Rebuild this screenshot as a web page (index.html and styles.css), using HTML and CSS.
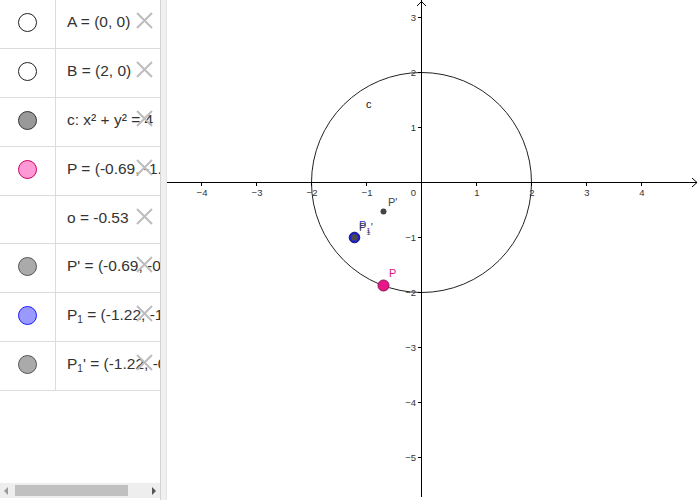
FILE: index.html
```html
<!DOCTYPE html>
<html>
<head>
<meta charset="utf-8">
<link rel="stylesheet" href="styles.css">
</head>
<body>
<div class="app">
  <div class="algebra">
    <div class="rows">
      <div class="row">
        <div class="marker"><span class="dot dot-white"></span></div>
        <div class="expr"><span class="text">A = (0, 0)</span><svg class="del" viewBox="0 0 17 17"><path d="M1 1L16 16M16 1L1 16"/></svg></div>
      </div>
      <div class="row">
        <div class="marker"><span class="dot dot-white"></span></div>
        <div class="expr"><span class="text">B = (2, 0)</span><svg class="del" viewBox="0 0 17 17"><path d="M1 1L16 16M16 1L1 16"/></svg></div>
      </div>
      <div class="row">
        <div class="marker"><span class="dot dot-dark"></span></div>
        <div class="expr"><span class="text">c: x² + y² = 4</span><svg class="del" viewBox="0 0 17 17"><path d="M1 1L16 16M16 1L1 16"/></svg></div>
      </div>
      <div class="row">
        <div class="marker"><span class="dot dot-pink"></span></div>
        <div class="expr"><span class="text">P = (-0.69, -1.88)</span><svg class="del" viewBox="0 0 17 17"><path d="M1 1L16 16M16 1L1 16"/></svg></div>
      </div>
      <div class="row">
        <div class="marker"></div>
        <div class="expr"><span class="text">o = -0.53</span><svg class="del" viewBox="0 0 17 17"><path d="M1 1L16 16M16 1L1 16"/></svg></div>
      </div>
      <div class="row">
        <div class="marker"><span class="dot dot-gray"></span></div>
        <div class="expr"><span class="text">P' = (-0.69, -0.53)</span><svg class="del" viewBox="0 0 17 17"><path d="M1 1L16 16M16 1L1 16"/></svg></div>
      </div>
      <div class="row">
        <div class="marker"><span class="dot dot-blue"></span></div>
        <div class="expr"><span class="text">P<sub>1</sub> = (-1.22, -1.00)</span><svg class="del" viewBox="0 0 17 17"><path d="M1 1L16 16M16 1L1 16"/></svg></div>
      </div>
      <div class="row">
        <div class="marker"><span class="dot dot-gray"></span></div>
        <div class="expr"><span class="text">P<sub>1</sub>' = (-1.22, -0.53)</span><svg class="del" viewBox="0 0 17 17"><path d="M1 1L16 16M16 1L1 16"/></svg></div>
      </div>
    </div>
    <div class="hscroll">
      <svg class="arrow" viewBox="0 0 5 8"><path d="M4 0L0 4L4 8Z"/></svg>
      <div class="track"><div class="thumb"></div></div>
      <svg class="arrow arrow-right" viewBox="0 0 5 8"><path d="M1 0L5 4L1 8Z"/></svg>
    </div>
  </div>
  <div class="divider"></div>
  <svg class="graph" width="533" height="500" viewBox="167 0 533 500">
    <circle cx="421.5" cy="182.5" r="110" fill="none" stroke="#222" stroke-width="1"/>
    <g stroke="#000" stroke-width="1" fill="none">
      <path d="M167 182.5H697"/>
      <path d="M692 178L697 182.5L692 187"/>
      <path d="M421.5 0V497"/>
      <path d="M417 6L421.5 1.5L426 6"/>
      <path d="M201.5 182.5V186M256.5 182.5V186M311.5 182.5V186M366.5 182.5V186M476.5 182.5V186M531.5 182.5V186M586.5 182.5V186M641.5 182.5V186"/>
      <path d="M418 17.5H421.5M418 72.5H421.5M418 127.5H421.5M418 237.5H421.5M418 292.5H421.5M418 347.5H421.5M418 402.5H421.5M418 457.5H421.5"/>
    </g>
    <g class="ticklabel" text-anchor="middle">
      <text x="202" y="196">−4</text>
      <text x="257" y="196">−3</text>
      <text x="312" y="196">−2</text>
      <text x="367" y="196">−1</text>
      <text x="477" y="196">1</text>
      <text x="532" y="196">2</text>
      <text x="587" y="196">3</text>
      <text x="642" y="196">4</text>
    </g>
    <g class="ticklabel" text-anchor="end">
      <text x="416" y="196">0</text>
      <text x="416" y="20.5">3</text>
      <text x="416" y="75.5">2</text>
      <text x="416" y="130.5">1</text>
      <text x="416" y="240.5">−1</text>
      <text x="416" y="295.5">−2</text>
      <text x="416" y="350.5">−3</text>
      <text x="416" y="405.5">−4</text>
      <text x="416" y="460.5">−5</text>
    </g>
    <text class="lbl" x="366" y="108" fill="#111">c</text>
    <text class="lbl" x="388" y="206" fill="#444">P'</text>
    <text class="lbl" x="389" y="277" fill="#e0147f">P</text>
    <text class="lbl" x="359" y="229" fill="#3030e0">P<tspan class="lsub" dy="4">1</tspan></text>
    <text class="lbl" x="359" y="230.5" fill="#444">P<tspan class="lsub" dy="4">1</tspan><tspan dy="-4">'</tspan></text>
    <circle cx="383.5" cy="211.5" r="3" fill="#444"/>
    <circle cx="383.5" cy="285.5" r="5.5" fill="#e8168a" stroke="#90104f" stroke-width="1"/>
    <circle cx="354.5" cy="237.5" r="5.3" fill="#1f1fd6" stroke="#101060" stroke-width="1"/>
    <circle cx="354.5" cy="237.5" r="3.2" fill="#4a4a4a"/>
  </svg>
</div>
</body>
</html>
```

FILE: styles.css
```css
html, body {
  margin: 0;
  padding: 0;
  background: #fff;
}
.app {
  display: flex;
  width: 700px;
  height: 500px;
  overflow: hidden;
  font-family: "Liberation Sans", Arial, sans-serif;
}
.algebra {
  width: 160px;
  height: 500px;
  display: flex;
  flex-direction: column;
  flex: none;
}
.rows {
  flex: 1;
}
.row {
  display: flex;
  align-items: center;
  height: 48.9px;
  box-sizing: border-box;
  border-bottom: 1px solid #dcdcdc;
}
.marker {
  width: 56px;
  height: 100%;
  border-right: 1px solid #dcdcdc;
  display: flex;
  align-items: center;
  justify-content: center;
  padding-bottom: 3px;
  box-sizing: border-box;
  flex: none;
}
.dot {
  width: 19px;
  height: 19px;
  border-radius: 50%;
  box-sizing: border-box;
  border: 1px solid #333;
}
.dot-white { background: #fff; border-color: #222; }
.dot-dark { background: #999; border-color: #333; }
.dot-pink { background: #ff99d6; border-color: #cc0066; }
.dot-gray { background: #aaa; border-color: #555; }
.dot-blue { background: #9999ff; border-color: #1a1aff; }
.expr {
  position: relative;
  flex: 1;
  height: 100%;
  display: flex;
  align-items: center;
  padding-left: 11px;
  padding-bottom: 4px;
  box-sizing: border-box;
  overflow: hidden;
  white-space: nowrap;
  font-size: 15.5px;
  color: #333;
}
.text sub {
  font-size: 10px;
  vertical-align: -3px;
  line-height: 0;
}
.del {
  position: absolute;
  left: 80px;
  top: 12px;
  width: 17px;
  height: 17px;
  stroke: #bdbdbd;
  stroke-width: 2;
  fill: none;
}
.hscroll {
  height: 15px;
  margin-bottom: 2px;
  background: #eeeeee;
  display: flex;
  align-items: center;
  padding: 0 4px;
}
.arrow {
  width: 5px;
  height: 8px;
  fill: #999;
  flex: none;
}
.arrow-right {
  fill: #555;
}
.track {
  flex: 1;
  height: 11px;
  margin: 0 6px;
}
.thumb {
  width: 113px;
  height: 11px;
  background: #c0c0c0;
}
.divider {
  width: 7px;
  height: 500px;
  box-sizing: border-box;
  background: #f0f0f0;
  border-left: 1px solid #d4d4d4;
  border-right: 1px solid #e4e4e4;
  flex: none;
}
.graph {
  display: block;
  flex: none;
}
.ticklabel text {
  font-family: "Liberation Sans", Arial, sans-serif;
  font-size: 9.5px;
  fill: #333;
}
.lbl {
  font-family: "Liberation Sans", Arial, sans-serif;
  font-size: 11px;
}
.lsub {
  font-size: 8px;
}
```
